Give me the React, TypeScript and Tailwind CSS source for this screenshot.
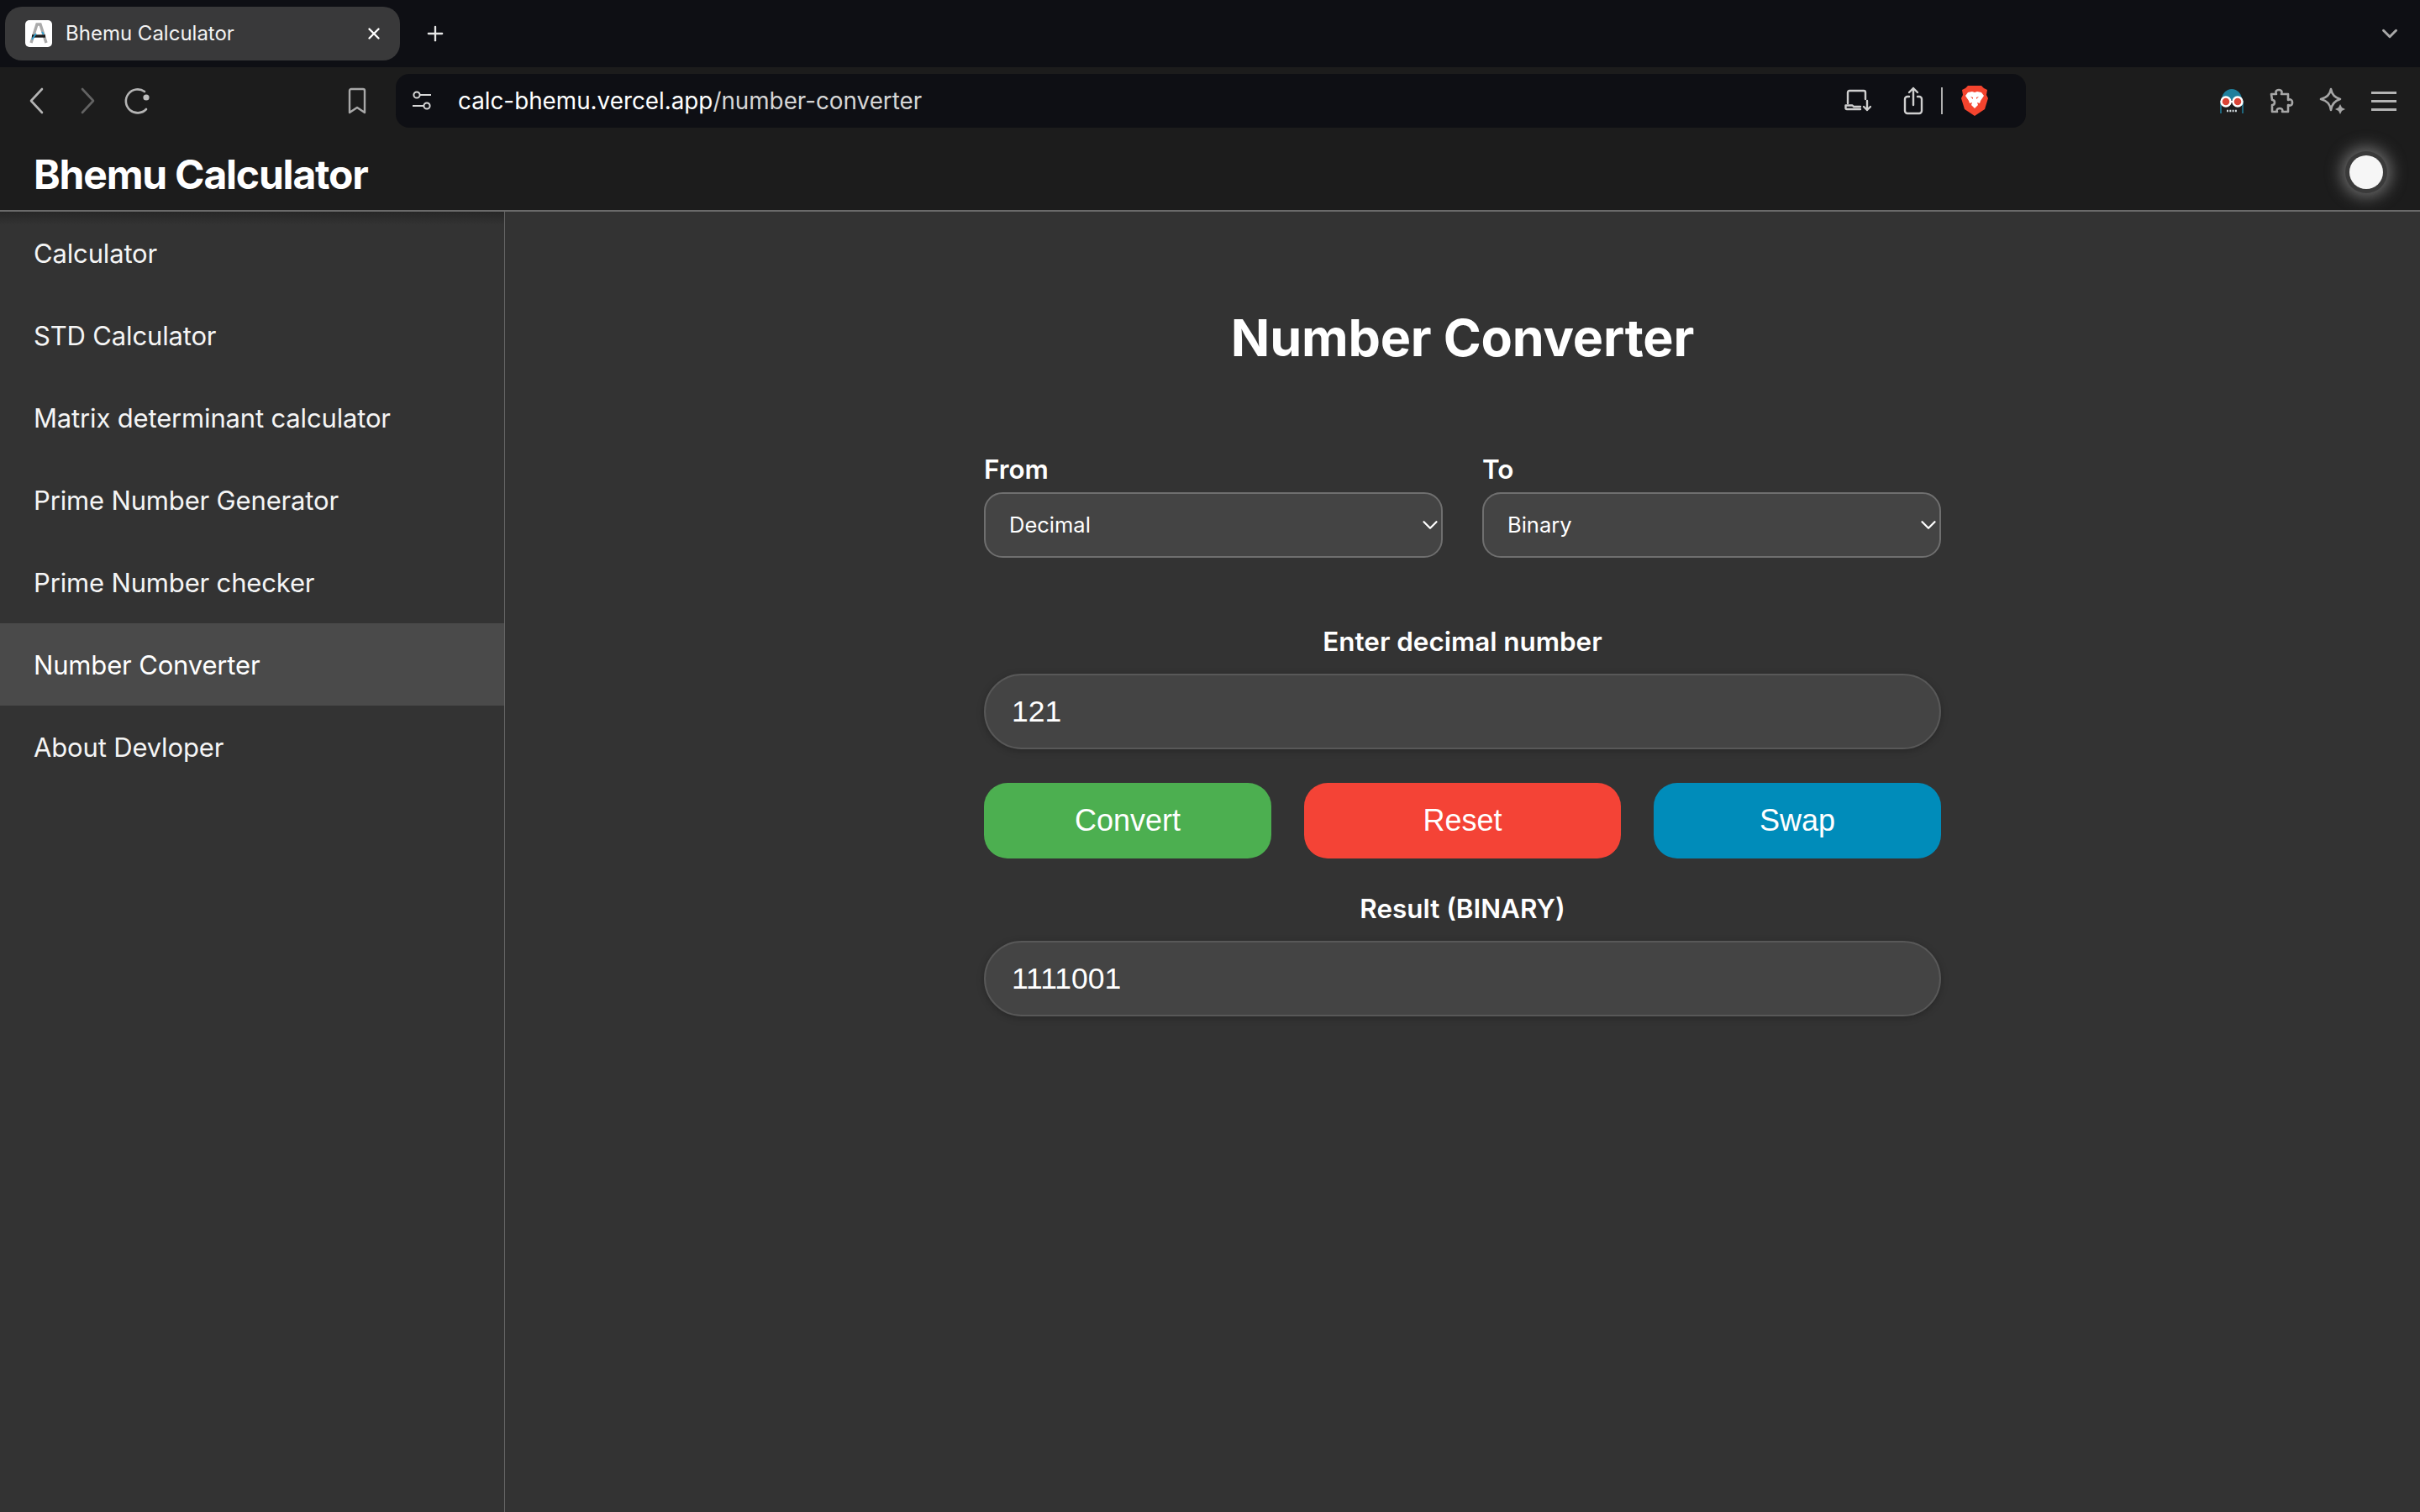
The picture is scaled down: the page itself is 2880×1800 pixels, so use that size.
import { ChevronDown, Plus, X } from "lucide-react";

const navItems = [
  "Calculator",
  "STD Calculator",
  "Matrix determinant calculator",
  "Prime Number Generator",
  "Prime Number checker",
  "Number Converter",
  "About Devloper",
];

function Favicon() {
  return (
    <div className="flex h-[32px] w-[32px] items-center justify-center rounded-[5px] bg-white">
      <svg width="26" height="26" viewBox="0 0 26 26" fill="none">
        <path d="M4 24 11 2h4l7 22" stroke="#a9a9a9" strokeWidth="3.4" />
        <path d="M5 16h16" stroke="#1c1c1c" strokeWidth="3.4" />
        <path d="M5 20l5-7M17 11l2 3" stroke="#2aa4d8" strokeWidth="1.6" />
      </svg>
    </div>
  );
}

function TabStrip() {
  return (
    <div className="flex h-[80px] shrink-0 items-center bg-[#0e0f14] pl-[6px] pr-[21px]">
      <div className="flex h-[64px] w-[470px] items-center rounded-[20px] bg-[#39393a] pl-[24px] pr-[20px]">
        <Favicon />
        <span className="ml-[16px] text-[24px] font-normal text-[#f2f2f2]">Bhemu Calculator</span>
        <X className="ml-auto h-[22px] w-[22px] text-white" strokeWidth={2.6} />
      </div>
      <Plus className="ml-[28px] h-[28px] w-[28px] text-[#e6e6e6]" strokeWidth={2} />
      <ChevronDown className="ml-auto h-[30px] w-[30px] text-[#a8a8a8]" strokeWidth={2.4} />
    </div>
  );
}

function ToolbarIcons() {
  return (
    <>
      <svg className="ml-[32px]" width="24" height="32" viewBox="0 0 24 32" fill="none" stroke="#b4b4b4" strokeWidth="2.6" strokeLinecap="round" strokeLinejoin="round">
        <path d="M18 2 5 16l13 14" />
      </svg>
      <svg className="ml-[36px]" width="24" height="32" viewBox="0 0 24 32" fill="none" stroke="#636363" strokeWidth="2.6" strokeLinecap="round" strokeLinejoin="round">
        <path d="M6 2l13 14L6 30" />
      </svg>
      <svg className="ml-[32px]" width="32" height="32" viewBox="0 0 32 32" fill="none">
        <path d="M24 5A14 14 0 1 0 26 26" stroke="#b4b4b4" strokeWidth="2.6" strokeLinecap="round" />
        <circle cx="26" cy="12" r="3.6" fill="#c0c0c0" />
      </svg>
      <svg className="ml-[233px]" width="24" height="32" viewBox="0 0 24 32" fill="none" stroke="#a8a8a8" strokeWidth="2.4" strokeLinejoin="round">
        <path d="M3 4a2 2 0 0 1 2-2h14a2 2 0 0 1 2 2v26l-9-6-9 6z" />
      </svg>
    </>
  );
}

function TuneIcon() {
  return (
    <svg width="26" height="26" viewBox="0 0 26 26" fill="none" stroke="#d8d8d8" strokeWidth="2">
      <circle cx="7" cy="6" r="3.6" />
      <path d="M11 6h13M2 19h13" />
      <circle cx="19" cy="19" r="3.6" />
    </svg>
  );
}

function InstallIcon() {
  return (
    <svg width="32" height="28" viewBox="0 0 32 28" fill="none" stroke="#cfcfcf" strokeWidth="2.4" strokeLinecap="round" strokeLinejoin="round">
      <path d="M4 17V4a2 2 0 0 1 2-2h17a2 2 0 0 1 2 2v8" />
      <path d="M19 24H3a1.5 1.5 0 0 1-1.5-1.5V19.500h8l1.500 1.500h8" />
      <path d="M27 14v11M23 21l4 4 4-4" />
    </svg>
  );
}

function ShareIcon() {
  return (
    <svg width="24" height="34" viewBox="0 0 24 34" fill="none" stroke="#cfcfcf" strokeWidth="2.4" strokeLinecap="round" strokeLinejoin="round">
      <path d="M7 12H5a3 3 0 0 0-3 3v14a3 3 0 0 0 3 3h14a3 3 0 0 0 3-3V15a3 3 0 0 0-3-3h-2" />
      <path d="M12 22V2M7 7l5-5 5 5" />
    </svg>
  );
}

function BraveLion() {
  return (
    <svg width="32" height="36" viewBox="0 0 32 36">
      <path d="M8 0h16l3 3 4 2-1 6 2 4-4 13-12 8-12-8L0 15l2-4-1-6 4-2z" fill="#f4442e" />
      <path d="M8 8l5-1 3 1 3-1 5 1 3 4-4 6-1 3-3-1 1 3-4 4-4-4 1-3-3 1-1-3-4-6z" fill="#fff" />
      <path d="M11 13l3 1v2zM21 13l-3 1v2z" fill="#f4442e" />
    </svg>
  );
}

function AvatarIcon() {
  return (
    <svg width="32" height="32" viewBox="0 0 32 32" fill="none">
      <path d="M4 15a12 13 0 0 1 24 0z" fill="#1f7f9c" />
      <path d="M3 16v15M29 16v15" stroke="#1f7f9c" strokeWidth="1.500" />
      <circle cx="9" cy="17" r="5.500" fill="#d94436" stroke="#fff" strokeWidth="2.400" />
      <circle cx="23" cy="17" r="5.500" fill="#d94436" stroke="#fff" strokeWidth="2.400" />
      <path d="M14 17h4" stroke="#fff" strokeWidth="2.400" />
      <path d="M10 28h12" stroke="#cfd8dc" strokeWidth="2.400" strokeDasharray="2 1.300" />
    </svg>
  );
}

function PuzzleIcon() {
  return (
    <svg width="30" height="30" viewBox="0 0 30 30" fill="none" stroke="#a6a6a6" strokeWidth="2.600" strokeLinejoin="round">
      <path d="M3 7h6c-1-2-1-5 3-5s4 3 3 5h8v7c2-1 5-1 5 3s-3 4-5 3v8h-7c1-2 0-4-3-4s-4 2-3 4H4v-8c2 0 3-1 3-3s-1-3-3-3z" />
    </svg>
  );
}

function SparkleIcon() {
  return (
    <svg width="32" height="32" viewBox="0 0 32 32" fill="none">
      <path d="M14 2c1 6 4 10 11 12-7 2-10 6-11 13-1-7-4-11-12-13 8-2 11-6 12-12z" stroke="#a6a6a6" strokeWidth="2.600" strokeLinejoin="round" />
      <path d="M25 20l2 4 4 2-4 2-2 4-2-4-4-2 4-2z" fill="#a6a6a6" />
    </svg>
  );
}

function AddressBar() {
  return (
    <div className="ml-[34px] flex h-[64px] w-[1940px] items-center rounded-[16px] bg-[#0e0f14] pl-[18px]">
      <TuneIcon />
      <div className="ml-[30px] pt-[2px] text-[27.800px] text-[#d6d6d6]">
        <span className="text-white">calc-bhemu.vercel.app</span>/number-converter
      </div>
      <div className="ml-auto flex items-center">
        <InstallIcon />
        <span className="ml-[38px]"><ShareIcon /></span>
        <span className="ml-[21px] h-[32px] w-[2px] bg-[#b0b0b0]" />
        <span className="ml-[22px] mr-[45px] flex"><BraveLion /></span>
      </div>
    </div>
  );
}

function Toolbar() {
  return (
    <div className="flex h-[85px] shrink-0 items-center bg-[#1c1c1c] pb-[5px]">
      <ToolbarIcons />
      <AddressBar />
      <div className="ml-[229px] flex items-center">
        <AvatarIcon />
        <span className="ml-[28px] flex"><PuzzleIcon /></span>
        <span className="ml-[30px] flex"><SparkleIcon /></span>
        <div className="ml-[30px] flex w-[30px] flex-col gap-[7px]">
          <span className="h-[3px] bg-[#b4b4b4]" />
          <span className="h-[3px] bg-[#b4b4b4]" />
          <span className="h-[3px] bg-[#b4b4b4]" />
        </div>
      </div>
    </div>
  );
}

function PageHeader() {
  return (
    <header className="flex h-[87px] shrink-0 items-center justify-between border-b-2 border-[#6a6a6a] bg-[#1c1c1c] pb-[5px] pl-[40px] pr-[44px]">
      <h1 className="pt-[6px] text-[48px] font-bold leading-none tracking-[-1.2px] text-white">Bhemu Calculator</h1>
      <div className="h-[40px] w-[40px] rounded-full bg-[#f6f6f6] shadow-[0_0_0_5px_#3a3a3a,0_0_18px_10px_#6a6a6a]" />
    </header>
  );
}

function Sidebar() {
  return (
    <nav className="w-[601px] shrink-0 border-r border-[#666] bg-[linear-gradient(#272727,#333_16px)]">
      {navItems.map((item) => (
        <div
          key={item}
          className={
            item === "Number Converter"
              ? "flex h-[98px] items-center bg-[#4a4a4a] pl-[40px] pt-[2px] text-[31px] tracking-[-0.16px] text-white"
              : "flex h-[98px] items-center pl-[40px] pt-[2px] text-[31px] tracking-[-0.16px] text-[#f5f5f5]"
          }
        >
          {item}
        </div>
      ))}
    </nav>
  );
}

function Dropdown({ label, value, options }: { label: string; value: string; options: string[] }) {
  return (
    <div className="w-[546px]">
      <label className="block pt-[2px] text-[31.400px] font-semibold leading-[34px] text-white">{label}</label>
      <div className="relative mt-[10px]">
        <select
          defaultValue={value}
          className="h-[78px] w-full appearance-none rounded-[22px] border-2 border-[#6f6f6f] bg-[#444] pl-[28px] text-[25.500px] text-white outline-none"
        >
          {options.map((o) => (
            <option key={o}>{o}</option>
          ))}
        </select>
        <ChevronDown className="pointer-events-none absolute right-0 top-[24px] h-[30px] w-[30px] text-white" strokeWidth={1.8} />
      </div>
    </div>
  );
}

function Field({ value }: { value: string }) {
  return (
    <input
      readOnly
      value={value}
      className="mt-[20px] h-[90px] w-full rounded-full border-2 border-[#585858] bg-[#444] pl-[31px] font-['Liberation_Sans',sans-serif] text-[35.500px] text-white shadow-[0_2px_8px_rgba(0,0,0,0.25)] outline-none"
    />
  );
}

function Converter() {
  const bases = ["Binary", "Decimal", "Octal", "Hexadecimal"];
  return (
    <main className="flex flex-1 flex-col items-center bg-[#333] pt-[114px]">
      <h2 className="text-[61px] font-bold leading-[72px] tracking-[-0.2px] text-white">Number Converter</h2>
      <div className="mt-[102px] w-[1139px]">
        <div className="flex justify-between">
          <Dropdown label="From" value="Decimal" options={bases} />
          <Dropdown label="To" value="Binary" options={bases} />
        </div>
        <div className="mt-[82px] text-center text-[31.400px] font-semibold leading-[36px] text-white">Enter decimal number</div>
        <Field value="121" />
        <div className="mt-[40px] flex gap-[39px] font-['Liberation_Sans',sans-serif] text-[36px] text-white">
          <button className="h-[90px] w-[342px] rounded-[28px] bg-[#4caf50]">Convert</button>
          <button className="h-[90px] w-[377px] rounded-[28px] bg-[#f44336]">Reset</button>
          <button className="h-[90px] w-[342px] rounded-[28px] bg-[#008cba]">Swap</button>
        </div>
        <div className="mt-[42px] text-center text-[31.400px] font-semibold leading-[36px] text-white">Result (BINARY)</div>
        <Field value="1111001" />
      </div>
    </main>
  );
}

export default function App() {
  return (
    <div className="flex h-[1800px] w-[2880px] flex-col overflow-hidden bg-[#333] font-['Inter',sans-serif]">
      <TabStrip />
      <Toolbar />
      <PageHeader />
      <div className="flex flex-1">
        <Sidebar />
        <Converter />
      </div>
    </div>
  );
}
